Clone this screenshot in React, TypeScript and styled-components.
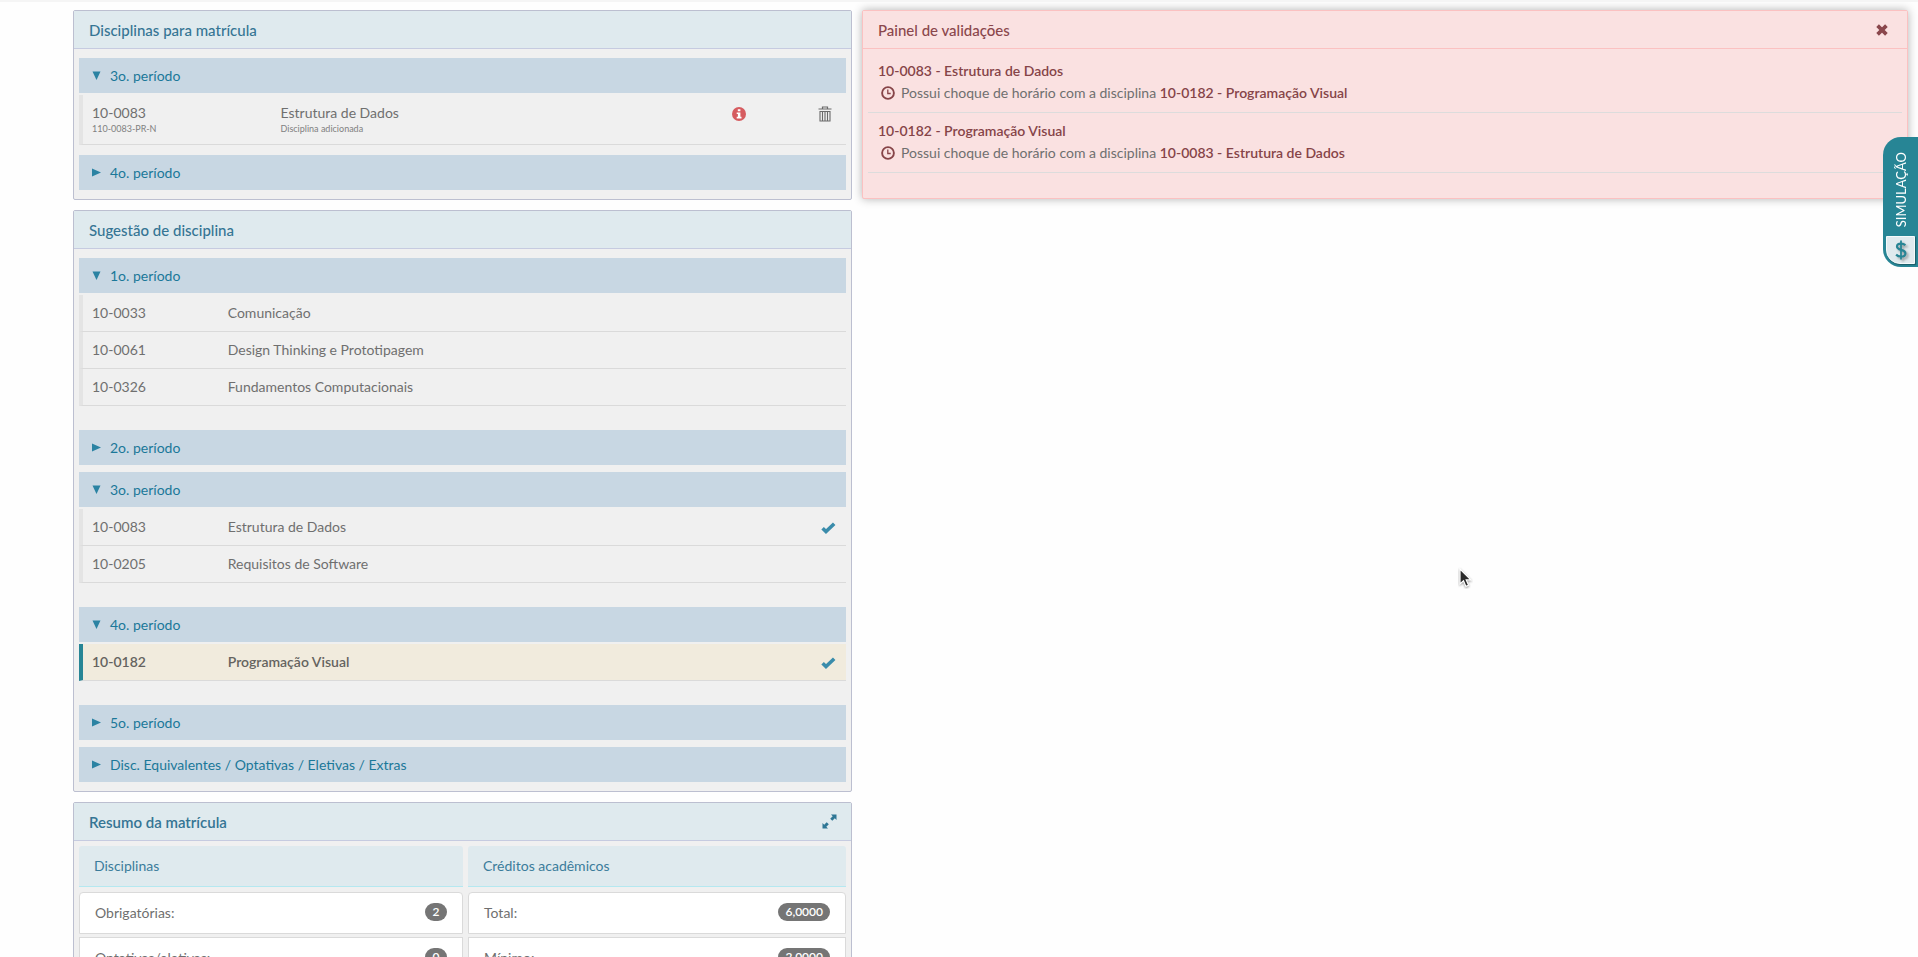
import React, { useState } from 'react';
import styled, { createGlobalStyle, css } from 'styled-components';

const GlobalStyle = createGlobalStyle`
  *, *::before, *::after { box-sizing: border-box; }
  body {
    margin: 0;
    background: #fefefe;
    color: #6f6f6f;
    font: 14px/20px Lato, "Open Sans", sans-serif;
  }
  h2, h3, p, ul { margin: 0; padding: 0; font-size: inherit; font-weight: inherit; }
  ul { list-style: none; }
  button { font: inherit; color: inherit; background: none; border: 0; padding: 0; cursor: pointer; }
`;

const Page = styled.div`
  border-top: 2px solid #f5f5f5;
  height: 100vh;
  overflow: hidden;
`;

const Columns = styled.main`
  display: grid;
  grid-template-columns: 779fr 1046fr;
  align-items: start;
  gap: 10px;
  padding: 8px 10px 8px 73px;
`;

const Stack = styled.div`
  display: flex;
  flex-direction: column;
  gap: 10px;
`;

const Panel = styled.section<{ $alert?: boolean }>`
  background: ${(p) => (p.$alert ? '#fae1e1' : '#f0f0f0')};
  border: 1px solid ${(p) => (p.$alert ? '#fbc1c1' : '#bcbfd0')};
  border-radius: 2px;
  ${(p) => p.$alert && css`
    box-shadow: 0 0 10px rgba(0, 0, 0, 0.3);
  `}
`;

const PanelHeader = styled.header<{ $alert?: boolean }>`
  display: flex;
  align-items: center;
  justify-content: space-between;
  height: 38px;
  padding: 0 ${(p) => (p.$alert ? 19 : 14)}px 0 15px;
  border-bottom: 1px solid ${(p) => (p.$alert ? '#fbc1c1' : '#c6cbe0')};
  background: ${(p) => (p.$alert ? '#fae1e1' : '#dfeaee')};
  color: ${(p) => (p.$alert ? '#8a474c' : '#357594')};
`;

const PanelTitle = styled.h2<{ $strong?: boolean }>`
  font-size: 15px;
  font-weight: ${(p) => (p.$strong ? 600 : 500)};
`;

const IconButton = styled.button`
  display: flex;
  align-items: center;
  justify-content: center;
`;

const Groups = styled.div<{ $openGap: number }>`
  --open-gap: ${(p) => p.$openGap}px;
  padding: 9px 5px;
`;

const GroupBar = styled.button`
  display: flex;
  align-items: center;
  gap: 9px;
  width: 100%;
  height: 35px;
  padding: 0 13px;
  background: #c8d7e3;
  color: #1b7899;
  text-align: left;
`;

const Group = styled.div<{ $open: boolean }>`
  margin-bottom: ${(p) => (p.$open ? 'var(--open-gap)' : '7px')};
  &:last-child { margin-bottom: 0; }
`;

const Courses = styled.ul`
  padding-top: 2px;
`;

const Course = styled.li<{ $codeWidth: string; $selected?: boolean; $tall?: boolean }>`
  display: grid;
  grid-template-columns: ${(p) => p.$codeWidth} 1fr auto;
  align-items: start;
  height: ${(p) => (p.$tall ? 50 : 37)}px;
  padding: 8px 0 8px 9px;
  border-left: 4px solid ${(p) => (p.$selected ? '#278595' : '#e4e4e4')};
  border-bottom: 1px solid #dadada;
  background: ${(p) => (p.$selected ? '#f1ebdd' : 'transparent')};
  color: ${(p) => (p.$selected ? '#656360' : '#6f6f6f')};
  font-weight: ${(p) => (p.$selected ? 600 : 400)};
`;

const Note = styled.small`
  display: block;
  font-size: 9px;
  line-height: 12px;
  color: #808080;
`;

const CourseIcons = styled.span`
  display: flex;
  align-items: center;
  gap: 72px;
  height: 22px;
  padding-right: 14px;
`;

const CheckSlot = styled.span`
  display: flex;
  align-items: center;
  height: 22px;
  padding-right: 10px;
`;

const Summary = styled.div`
  display: grid;
  grid-template-columns: 384fr 378fr;
  gap: 5px;
  padding: 5px;
`;

const SummaryTitle = styled.h3`
  height: 41px;
  margin-bottom: 5px;
  padding: 0 15px;
  border-bottom: 1px solid #b5e8f0;
  border-radius: 3px 3px 0 0;
  background: #dfeaee;
  color: #3b7c9b;
  line-height: 40px;
`;

const Totals = styled.ul`
  display: flex;
  flex-direction: column;
  gap: 3px;
`;

const Total = styled.li`
  display: flex;
  align-items: center;
  justify-content: space-between;
  height: 42px;
  padding: 0 15px;
  border: 1px solid #dadada;
  background: #ffffff;
  &:first-child { border-radius: 4px 4px 0 0; }
`;

const Badge = styled.span`
  min-width: 22px;
  margin-bottom: 2px;
  padding: 0 7px;
  border-radius: 9px;
  background: #757575;
  color: #ffffff;
  font-size: 12px;
  font-weight: 600;
  line-height: 18px;
  text-align: center;
`;

const Issues = styled.ul`
  padding: 4px 5px 25px;
`;

const Issue = styled.li`
  padding: 7px 10px 8px;
  border-bottom: 1px solid #dcdcdc;
  line-height: 22px;
`;

const IssueCourse = styled.span`
  color: #864448;
  font-weight: 600;
`;

const IssueText = styled.p`
  display: flex;
  align-items: center;
  gap: 6px;
  padding-left: 3px;
`;

const SimulationTab = styled.button`
  position: fixed;
  top: 137px;
  right: 0;
  display: flex;
  flex-direction: column;
  align-items: center;
  justify-content: space-between;
  width: 35px;
  height: 130px;
  padding: 15px 3px 3px;
  border-radius: 18px 0 0 18px;
  background: #278595;
  color: #ffffff;
`;

const TabLabel = styled.span`
  writing-mode: vertical-rl;
  transform: rotate(180deg);
  font-size: 13px;
  line-height: 20px;
`;

const TabIcon = styled.span`
  display: flex;
  align-items: center;
  justify-content: center;
  width: 29px;
  height: 28px;
  border: 1px solid #f4fafb;
  border-radius: 0 0 0 14px;
  background: #dfeaee;
  box-shadow: 1px 1px 1px rgba(0, 0, 0, 0.3);
  svg { filter: drop-shadow(2px 2px 1px rgba(0, 0, 0, 0.3)); }
`;

const Pointer = styled.svg`
  position: absolute;
  left: 1458px;
  top: 567px;
  pointer-events: none;
`;

const Caret = ({ open }: { open: boolean }) => (
  <svg width="9" height="9" viewBox="0 0 9 9" fill="#2b83a3" aria-hidden="true">
    <path d={open ? 'M0.5 0.5h8l-4 8.5z' : 'M0 0.5v8l9-4z'} />
  </svg>
);

const CheckIcon = () => (
  <svg width="15" height="12" viewBox="0 0 15 12" role="img" aria-label="Selecionada">
    <path d="M1.6 6.2l3.4 3.3L13.2 1.800" fill="none" stroke="#3a8cab" strokeWidth="3.600" />
  </svg>
);

const InfoIcon = () => (
  <svg width="14" height="14" viewBox="0 0 14 14" aria-hidden="true">
    <circle cx="7" cy="7" r="7" fill="#d65c60" />
    <path d="M5.8 2.2h2.6v2H5.8zM4.7 5.4h3.7v4.4h1.1v1.6H4.7V9.8h1.2V7H4.7z" fill="#fff" />
  </svg>
);

const TrashIcon = () => (
  <svg width="14" height="16" viewBox="0 0 14 16" fill="none" stroke="#6a6a6a" aria-hidden="true">
    <path d="M0.5 3h13M4.500 3V1h5v2" strokeWidth="1.2" />
    <path d="M2 5.500h10v9.500H2zM4.500 5.500v9M7 5.500v9M9.500 5.500v9" strokeWidth="1.1" />
  </svg>
);

const ClockIcon = () => (
  <svg width="14" height="14" viewBox="0 0 14 14" fill="none" stroke="#864448" aria-hidden="true">
    <circle cx="7" cy="7" r="5.9" strokeWidth="1.9" />
    <path d="M6.8 3.5v4h2.9" strokeWidth="1.3" />
  </svg>
);

const CloseIcon = () => (
  <svg width="12" height="12" viewBox="0 0 12 12" aria-hidden="true">
    <path d="M1.6 1.6l8.8 8.8M10.4 1.6L1.6 10.4" stroke="#8a474c" strokeWidth="3.7" />
  </svg>
);

const ExpandIcon = () => (
  <svg width="15" height="15" viewBox="0 0 15 15" fill="#2f7795" aria-hidden="true">
    <path d="M9 0.5h5.5V6l-1.7-1.7-2.5 2.5-2.1-2.1 2.5-2.5z" />
    <path d="M6 14.5H0.5V9l1.7 1.7 2.5-2.5 2.1 2.1-2.5 2.5z" />
  </svg>
);

const DollarIcon = () => (
  <svg width="12" height="20" viewBox="0 0 12 20" fill="none" stroke="#278595" aria-hidden="true">
    <path d="M6 0.5v19" strokeWidth="1.8" />
    <path d="M10.400 5.200C9.200 4.200 7.700 3.600 6 3.600c-2.400 0-4 1.100-4 2.900 0 4.400 8.400 2.400 8.400 6.900 0 1.900-1.800 3.100-4.400 3.100-1.900 0-3.700-0.700-4.900-1.900" strokeWidth="2.200" />
  </svg>
);

type CourseData = { code: string; name: string; checked?: boolean; selected?: boolean };
type Period = { title: string; courses?: CourseData[] };

const suggestions: Period[] = [
  {
    title: '1o. período',
    courses: [
      { code: '10-0033', name: 'Comunicação' },
      { code: '10-0061', name: 'Design Thinking e Prototipagem' },
      { code: '10-0326', name: 'Fundamentos Computacionais' },
    ],
  },
  { title: '2o. período' },
  {
    title: '3o. período',
    courses: [
      { code: '10-0083', name: 'Estrutura de Dados', checked: true },
      { code: '10-0205', name: 'Requisitos de Software' },
    ],
  },
  {
    title: '4o. período',
    courses: [{ code: '10-0182', name: 'Programação Visual', checked: true, selected: true }],
  },
  { title: '5o. período' },
  { title: 'Disc. Equivalentes / Optativas / Eletivas / Extras' },
];

const summary = [
  { title: 'Disciplinas', totals: [['Obrigatórias:', '2'], ['Optativas/eletivas:', '0']] },
  { title: 'Créditos acadêmicos', totals: [['Total:', '6,0000'], ['Mínimo:', '2,0000']] },
];

const issues = [
  ['10-0083 - Estrutura de Dados', '10-0182 - Programação Visual'],
  ['10-0182 - Programação Visual', '10-0083 - Estrutura de Dados'],
];

type PeriodGroupProps = {
  title: string;
  initiallyOpen?: boolean;
  children?: React.ReactNode;
};

function PeriodGroup({ title, initiallyOpen = false, children }: PeriodGroupProps) {
  const [open, setOpen] = useState(initiallyOpen);
  return (
    <Group $open={open}>
      <GroupBar type="button" aria-expanded={open} onClick={() => setOpen(!open)}>
        <Caret open={open} />
        {title}
      </GroupBar>
      {open && children && <Courses>{children}</Courses>}
    </Group>
  );
}

export default function App() {
  const [showIssues, setShowIssues] = useState(true);
  return (
    <Page>
      <GlobalStyle />
      <Columns>
        <Stack>
          <Panel>
            <PanelHeader>
              <PanelTitle>Disciplinas para matrícula</PanelTitle>
            </PanelHeader>
            <Groups $openGap={10}>
              <PeriodGroup title="3o. período" initiallyOpen>
                <Course $codeWidth="25%" $tall>
                  <span>10-0083<Note>110-0083-PR-N</Note></span>
                  <span>Estrutura de Dados<Note>Disciplina adicionada</Note></span>
                  <CourseIcons>
                    <IconButton type="button" aria-label="Informações"><InfoIcon /></IconButton>
                    <IconButton type="button" aria-label="Remover disciplina"><TrashIcon /></IconButton>
                  </CourseIcons>
                </Course>
              </PeriodGroup>
              <PeriodGroup title="4o. período" />
            </Groups>
          </Panel>

          <Panel>
            <PanelHeader>
              <PanelTitle>Sugestão de disciplina</PanelTitle>
            </PanelHeader>
            <Groups $openGap={24}>
              {suggestions.map((period) => (
                <PeriodGroup key={period.title} title={period.title} initiallyOpen={!!period.courses}>
                  {period.courses?.map((course) => (
                    <Course key={course.code} $codeWidth="18%" $selected={course.selected}>
                      <span>{course.code}</span>
                      <span>{course.name}</span>
                      {course.checked && <CheckSlot><CheckIcon /></CheckSlot>}
                    </Course>
                  ))}
                </PeriodGroup>
              ))}
            </Groups>
          </Panel>

          <Panel>
            <PanelHeader>
              <PanelTitle $strong>Resumo da matrícula</PanelTitle>
              <IconButton type="button" aria-label="Expandir resumo"><ExpandIcon /></IconButton>
            </PanelHeader>
            <Summary>
              {summary.map((section) => (
                <div key={section.title}>
                  <SummaryTitle>{section.title}</SummaryTitle>
                  <Totals>
                    {section.totals.map(([label, value]) => (
                      <Total key={label}>
                        <span>{label}</span>
                        <Badge>{value}</Badge>
                      </Total>
                    ))}
                  </Totals>
                </div>
              ))}
            </Summary>
          </Panel>
        </Stack>

        {showIssues && (
          <Panel $alert>
            <PanelHeader $alert>
              <PanelTitle>Painel de validações</PanelTitle>
              <IconButton type="button" aria-label="Fechar" onClick={() => setShowIssues(false)}>
                <CloseIcon />
              </IconButton>
            </PanelHeader>
            <Issues>
              {issues.map(([course, conflict]) => (
                <Issue key={course}>
                  <IssueCourse>{course}</IssueCourse>
                  <IssueText>
                    <ClockIcon />
                    <span>
                      Possui choque de horário com a disciplina <IssueCourse>{conflict}</IssueCourse>
                    </span>
                  </IssueText>
                </Issue>
              ))}
            </Issues>
          </Panel>
        )}
      </Columns>

      <SimulationTab type="button">
        <TabLabel>SIMULAÇÃO</TabLabel>
        <TabIcon><DollarIcon /></TabIcon>
      </SimulationTab>

      <Pointer width="15" height="22" viewBox="0 0 15 22" aria-hidden="true">
        <path
          d="M2 2v15l3.5-3.2 2.4 5.6 2.7-1.2-2.4-5.3h4.6z"
          fill="#2b2b2b"
          stroke="#ffffff"
          strokeWidth="1.2"
          filter="drop-shadow(0 1px 1px rgba(0,0,0,0.4))"
        />
      </Pointer>
    </Page>
  );
}
